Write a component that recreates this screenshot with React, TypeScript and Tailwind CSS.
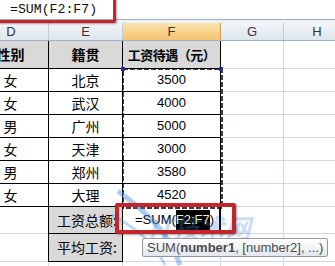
import React from "react";

const rows = [
  ["女", "北京", "3500"],
  ["女", "武汉", "4000"],
  ["男", "广州", "5000"],
  ["女", "天津", "3000"],
  ["男", "郑州", "3580"],
  ["女", "大理", "4520"],
];

const cols = "grid grid-cols-[49px_74px_98px_63px_51px]";
const cjk = "font-['Noto_Sans_CJK_SC',sans-serif]";

function Grid() {
  return (
    <>
      <div className="border-r border-b border-[#d0d7e5]" />
      <div className="border-b border-[#d0d7e5]" />
    </>
  );
}

export default function App() {
  return (
    <div className="relative w-[335px] h-[266px] overflow-hidden bg-white font-['Liberation_Sans',sans-serif] text-black">
      {/* formula bar */}
      <div className="h-[20px] border-b border-[#a3adba] bg-white pl-[10px] flex items-center font-['Liberation_Mono',monospace] text-[13.2px] text-[#111]">
        =SUM(F2:F7)
      </div>
      <div className="h-[3px] bg-[#eef1f5]" />

      {/* column headers */}
      <div className={`${cols} h-[18px] border-b border-[#9eb0c6] text-[13px] text-[#333] leading-[17px]`}>
        <div className="overflow-hidden border-r border-[#c3cdda] bg-gradient-to-b from-[#f3f6fa] to-[#dfe5ed]">
          <div className="w-[76px] -ml-[27px] text-center">D</div>
        </div>
        <div className="text-center border-r border-[#c3cdda] bg-gradient-to-b from-[#f3f6fa] to-[#dfe5ed]">E</div>
        <div className="text-center border-r border-[#c99b4f] bg-gradient-to-b from-[#fbe2b0] to-[#f4c46c]">F</div>
        <div className="text-center border-r border-[#c3cdda] bg-gradient-to-b from-[#f3f6fa] to-[#dfe5ed]">G</div>
        <div className="overflow-hidden bg-gradient-to-b from-[#f3f6fa] to-[#dfe5ed]">
          <div className="w-[66px] text-center">H</div>
        </div>
      </div>

      {/* header row */}
      <div className={`${cols} h-[28px] font-bold text-[14px] ${cjk}`}>
        <div className="overflow-hidden bg-[#d9d9d9] border-r border-b border-black flex items-center">
          <div className="w-[76px] -ml-[27px] text-center">性别</div>
        </div>
        <div className="bg-[#d9d9d9] border-r border-b border-black flex items-center justify-center">籍贯</div>
        <div className="bg-[#d9d9d9] border-r border-b border-black flex items-center justify-center text-[13px] tracking-[-0.5px]">
          工资待遇（元）
        </div>
        <Grid />
      </div>

      {/* data rows */}
      {rows.map(([sex, city, pay]) => (
        <div key={city} className={`${cols} h-[23px]`}>
          <div className={`overflow-hidden border-r border-b border-black flex items-center text-[14px] ${cjk}`}>
            <div className="w-[76px] -ml-[27px] text-center">{sex}</div>
          </div>
          <div className={`border-r border-b border-black flex items-center justify-center text-[14px] ${cjk}`}>{city}</div>
          <div className="border-r border-b border-black flex items-center justify-center text-[13px]">{pay}</div>
          <Grid />
        </div>
      ))}

      {/* total row */}
      <div className={`${cols} h-[27px]`}>
        <div className="border-r border-b border-[#d0d7e5]" />
        <div className={`bg-[#d9d9d9] border-l border-r border-b border-black -ml-px flex items-center pl-[8px] text-[14px] ${cjk}`}>
          工资总额:
        </div>
        <div className="border-r-2 border-b border-r-black border-b-[#d0d7e5] flex items-center pl-[12px] text-[13px]">
          =SUM(<span className="bg-black text-[#f2efc4]">F2:F7</span>)
        </div>
        <Grid />
      </div>

      {/* average row */}
      <div className={`${cols} h-[28px]`}>
        <div className="border-r border-b border-[#d0d7e5]" />
        <div className={`bg-[#d9d9d9] border-l border-r border-b border-black -ml-px flex items-center pl-[8px] text-[14px] ${cjk}`}>
          平均工资:
        </div>
        <div className="border-r border-b border-[#d0d7e5]" />
        <Grid />
      </div>
      <div className={`${cols} h-[10px]`}>
        <div className="border-r border-[#d0d7e5]" />
        <div className="border-r border-[#d0d7e5]" />
        <div className="border-r border-[#d0d7e5]" />
        <div className="border-r border-[#d0d7e5]" />
        <div />
      </div>

      {/* copy range marching ants */}
      <svg className="absolute left-[122px] top-[68px]" width="101" height="141">
        <rect x="1" y="1" width="99" height="139" fill="none" stroke="#000" strokeWidth="1.5" strokeDasharray="5 2" />
      </svg>
      <div className="absolute left-[121px] top-[67px] w-[4px] h-[4px] bg-[#22308f]" />
      <div className="absolute left-[219px] top-[67px] w-[4px] h-[4px] bg-[#22308f]" />

      {/* watermark */}
      <svg className="absolute left-[110px] top-[185px]" width="80" height="81">
        <path d="M8 6 C 40 30, 60 50, 70 80" fill="none" stroke="rgba(70,140,220,0.45)" strokeWidth="5" />
        <path d="M2 30 C 30 45, 45 60, 55 80" fill="none" stroke="rgba(70,140,220,0.35)" strokeWidth="3" />
      </svg>
      <div className={`absolute left-[148px] top-[214px] text-[26px] font-bold italic leading-none text-[rgba(70,140,220,0.3)] ${cjk}`}>
        IT技术网
      </div>

      {/* red highlight boxes */}
      <div className="absolute left-[-6px] top-[-6px] w-[122px] h-[29px] border-[3.5px] border-[#c3262c] rounded-[2px] shadow-[1px_1px_2px_rgba(0,0,0,0.35)]" />
      <div className="absolute left-[115px] top-[203px] w-[121px] h-[31px] border-4 border-[#c3262c] rounded-[2px] shadow-[1px_1px_2px_rgba(0,0,0,0.35)]" />

      {/* function tooltip */}
      <div className="absolute left-[142px] top-[238px] w-[186px] h-[19px] border border-[#8e98a6] rounded-[2px] bg-gradient-to-b from-white to-[#e2e7ee] text-[13px] text-[#4a4a4a] pl-[4px] leading-[17px] whitespace-nowrap">
        SUM(<span className="font-bold">number1</span>, [number2], ...)
      </div>
    </div>
  );
}
